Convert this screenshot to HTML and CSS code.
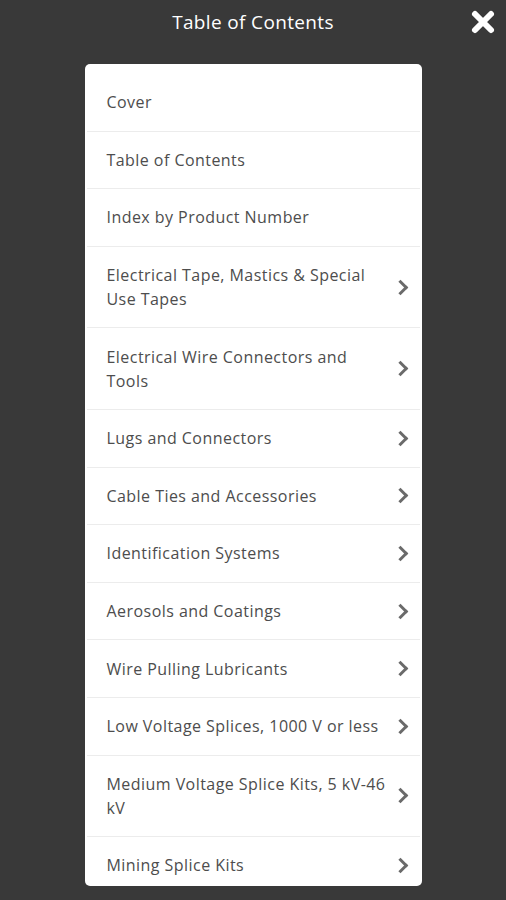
FILE: index.html
```html
<!DOCTYPE html>
<html>
<head>
<meta charset="utf-8">
<link rel="stylesheet" href="styles.css">
</head>
<body>
<div class="header">
  <div class="title">Table of Contents</div>
  <div class="close">
    <svg width="26" height="26" viewBox="0 0 26 26"><path d="M5 5 L21 21 M21 5 L5 21" stroke="#fff" stroke-width="6" stroke-linecap="round"/></svg>
  </div>
</div>
<div class="card">
  <div class="row"><span class="label">Cover</span></div>
  <div class="row"><span class="label">Table of Contents</span></div>
  <div class="row"><span class="label">Index by Product Number</span></div>
  <div class="row"><span class="label">Electrical Tape, Mastics &amp; Special Use Tapes</span><span class="chev"></span></div>
  <div class="row"><span class="label">Electrical Wire Connectors and Tools</span><span class="chev"></span></div>
  <div class="row"><span class="label">Lugs and Connectors</span><span class="chev"></span></div>
  <div class="row"><span class="label">Cable Ties and Accessories</span><span class="chev"></span></div>
  <div class="row"><span class="label">Identification Systems</span><span class="chev"></span></div>
  <div class="row"><span class="label">Aerosols and Coatings</span><span class="chev"></span></div>
  <div class="row"><span class="label">Wire Pulling Lubricants</span><span class="chev"></span></div>
  <div class="row"><span class="label">Low Voltage Splices, 1000 V or less</span><span class="chev"></span></div>
  <div class="row"><span class="label">Medium Voltage Splice Kits, 5 kV-46 kV</span><span class="chev"></span></div>
  <div class="row"><span class="label">Mining Splice Kits</span><span class="chev"></span></div>
</div>
</body>
</html>
```

FILE: styles.css
```css
html, body {
  margin: 0;
  padding: 0;
  background: #393939;
  height: 900px;
  overflow: hidden;
  font-family: "Open Sans", "Noto Sans", sans-serif;
}
.header {
  height: 44px;
  display: flex;
  align-items: center;
  justify-content: center;
  position: relative;
}
.title {
  color: #fff;
  font-size: 19px;
  letter-spacing: 0.35px;
}
.close {
  position: absolute;
  right: 10px;
  top: 9px;
  width: 26px;
  height: 26px;
}
.card {
  margin: 20px auto 0;
  width: 337px;
  height: 822px;
  box-sizing: border-box;
  background: #fff;
  border-radius: 5px;
  padding-top: 10px;
  overflow: hidden;
}
.row {
  display: flex;
  align-items: center;
  padding: 16.3px 12px 16.3px 22px;
  margin: 0 2px;
  border-bottom: 1px solid #ececec;
  color: #4d4d4d;
  font-size: 16px;
  line-height: 24px;
  letter-spacing: 0.45px;
}
.row .label {
  flex: 1;
  padding-right: 6px;
  margin-left: -2px;
}
.chev {
  width: 8px;
  height: 8px;
  border-right: 3px solid #6a6a6a;
  border-top: 3px solid #6a6a6a;
  transform: rotate(45deg);
  margin-right: 2px;
  flex: none;
}
```
